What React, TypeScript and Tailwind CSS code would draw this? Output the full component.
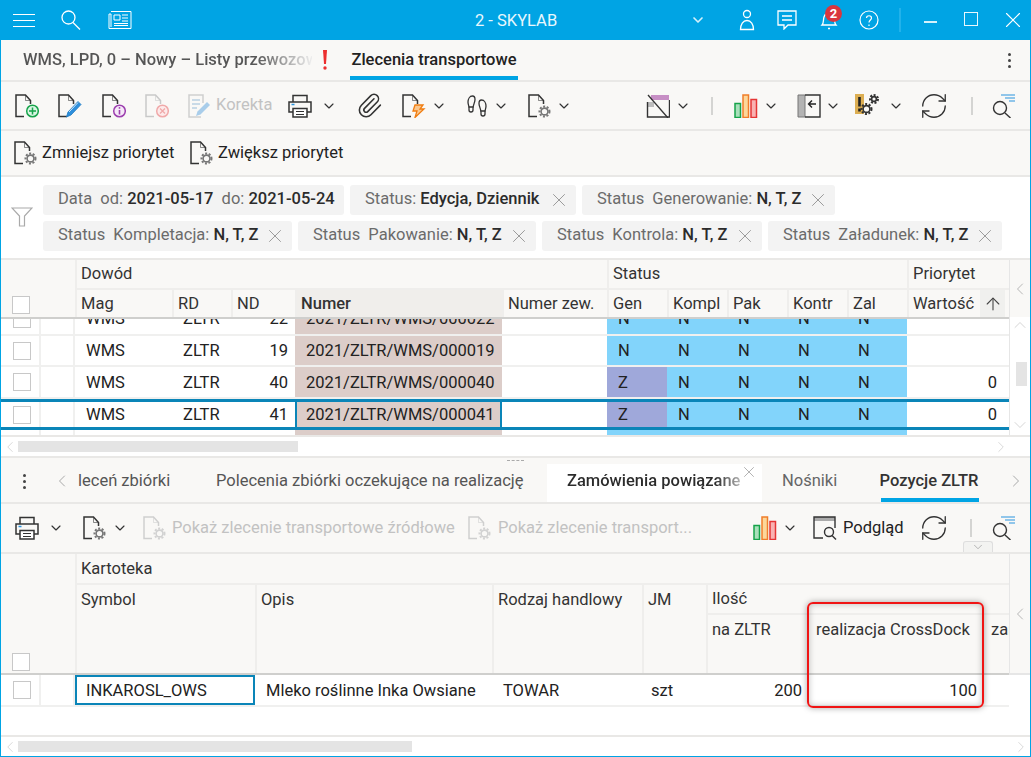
import { ChevronDown, ChevronLeft, ChevronRight, ChevronUp, Footprints, Paperclip, RefreshCw, X, ArrowUp } from 'lucide-react';
import type { ReactNode } from 'react';

const topCols = 'grid grid-cols-[40px_34px_97px_59px_64px_207px_105px_60px_60px_60px_60px_60px_102px]';
const bottomCols = 'grid grid-cols-[40px_34px_180px_237px_150px_64px_101px_177px_25px]';

const Gear = ({ x, y, r = 4, color = '#777' }: { x: number; y: number; r?: number; color?: string }) => (
  <g fill="none" stroke={color}>
    <circle cx={x} cy={y} r={r + 1} strokeWidth="2" strokeDasharray="2 1.6" />
    <circle cx={x} cy={y} r={r - 0.6} strokeWidth="1.6" />
  </g>
);

const Doc = ({ children, stroke = '#333' }: { children?: ReactNode; stroke?: string }) => (
  <svg width="24" height="24" viewBox="0 0 24 24" fill="none" className="shrink-0">
    <path d="M9 22.500H1V1h9.500l5 5.500V10" stroke={stroke} strokeWidth="1.500" />
    <path d="M10.500 1.500v5h5" stroke={stroke} strokeWidth="0.800" opacity="0.7" />
    {children}
  </svg>
);

const DocPlus = () => (
  <Doc>
    <circle cx="17.500" cy="17" r="5.800" fill="#d9f5e3" stroke="#16a34a" strokeWidth="1.500" />
    <path d="M17.500 13.500v7M14 17h7" stroke="#16a34a" strokeWidth="1.500" />
  </Doc>
);
const DocPen = () => (
  <Doc>
    <path d="M8.500 23l1.500-5 10-10.500 3 3L13 21z" fill="#2e8fdc" stroke="#1c79c0" strokeWidth="0.800" />
    <path d="M11 18l9-9.500" stroke="#fff" strokeWidth="0.800" />
  </Doc>
);
const DocInfo = () => (
  <Doc>
    <circle cx="17.500" cy="17" r="5.800" fill="#f6e8f8" stroke="#9c3fae" strokeWidth="1.500" />
    <path d="M17.500 16v4.500" stroke="#9c3fae" strokeWidth="1.600" />
    <circle cx="17.500" cy="13.900" r="0.900" fill="#9c3fae" />
  </Doc>
);
const DocX = () => (
  <Doc stroke="#c9c9c9">
    <circle cx="17.500" cy="17" r="5.800" fill="#fdeaea" stroke="#f0a9a9" strokeWidth="1.500" />
    <path d="M15 14.500l5 5M20 14.500l-5 5" stroke="#f0a9a9" strokeWidth="1.300" />
  </Doc>
);
const DocBolt = () => (
  <Doc>
    <path d="M13 11h8l-3 4h4l-9 8.500 2-6.500h-4z" fill="#fbc78d" stroke="#f07d12" strokeWidth="1.300" />
  </Doc>
);
const DocGear = ({ muted = false }: { muted?: boolean }) => (
  <Doc stroke={muted ? '#cfcfcf' : '#333'}>
    <Gear x={16.5} y={17.5} color={muted ? '#d2d2d2' : '#777'} />
  </Doc>
);

const EditNote = () => (
  <svg width="24" height="24" viewBox="0 0 24 24" fill="none" className="shrink-0">
    <path d="M14 23H2V1h14v8" stroke="#cfcfcf" strokeWidth="1.500" />
    <path d="M5 6h8M5 10h8M5 14h5" stroke="#b9cfe2" strokeWidth="1.300" />
    <path d="M9 22l1.500-4.500L20 8l3 3-9.500 9.500z" fill="#a9cdea" />
  </svg>
);

const Printer = () => (
  <svg width="24" height="24" viewBox="0 0 24 24" fill="none" className="shrink-0">
    <path d="M5 8V1.500h14V8" stroke="#333" strokeWidth="1.500" />
    <path d="M5 18H1V8h22v10h-4" stroke="#333" strokeWidth="1.500" />
    <path d="M5 14.500h14v8.500H5z" fill="#fff" stroke="#333" strokeWidth="1.500" />
    <path d="M8 17.500h8M8 20.500h8" stroke="#333" />
    <path d="M3.500 10.500h3" stroke="#2a94de" strokeWidth="1.500" />
  </svg>
);

const Bars = () => (
  <svg width="24" height="24" viewBox="0 0 24 24" className="shrink-0">
    <rect x="1" y="9.500" width="5.500" height="14" fill="#a9e0bb" stroke="#16a34a" strokeWidth="1.500" />
    <rect x="9" y="1" width="5.500" height="22.500" fill="#fcd79a" stroke="#f07d2a" strokeWidth="1.500" />
    <rect x="17" y="5.500" width="5.500" height="18" fill="#f9b2b2" stroke="#e53535" strokeWidth="1.500" />
  </svg>
);

const CalendarOff = () => (
  <svg width="24" height="24" viewBox="0 0 24 24" fill="none" className="shrink-0">
    <path d="M5 1h18v5H5z" fill="#c78fc5" />
    <path d="M1 8h7v5H1z" fill="#bdbdbd" />
    <path d="M1.500 8v15h22V6" stroke="#333" strokeWidth="1.400" />
    <path d="M2 1l20 23" stroke="#333" strokeWidth="1.300" />
  </svg>
);

const PanelArrow = () => (
  <svg width="24" height="24" viewBox="0 0 24 24" fill="none" className="shrink-0">
    <path d="M1 1h7v22H1z" fill="#b3b3b3" stroke="#777" />
    <path d="M8 1h15v22H8" stroke="#333" strokeWidth="1.400" />
    <path d="M19 10h-7M15 6.500L11.500 10l3.500 3.500" stroke="#222" strokeWidth="1.400" />
  </svg>
);

const AlertGears = () => (
  <svg width="24" height="24" viewBox="0 0 24 24" fill="none" className="shrink-0">
    <path d="M0 0h9v20H0z" fill="#dcae52" />
    <path d="M4.500 3v9.500" stroke="#222" strokeWidth="2.600" />
    <path d="M4.500 14.500v3" stroke="#222" strokeWidth="2.600" />
    <Gear x={11.5} y={15} r={4} color="#333" />
    <Gear x={19} y={5} r={3} color="#333" />
  </svg>
);

const SearchLines = () => (
  <svg width="24" height="24" viewBox="0 0 24 24" fill="none" className="shrink-0">
    <circle cx="9" cy="14" r="6.500" stroke="#333" strokeWidth="1.400" />
    <path d="M14 19l5.500 5" stroke="#333" strokeWidth="1.400" />
    <path d="M10 1h14M14 4h10M18 7h6" stroke="#2a94de" strokeWidth="1.200" />
  </svg>
);

const Preview = () => (
  <svg width="24" height="24" viewBox="0 0 24 24" fill="none" className="shrink-0">
    <path d="M1 1h21v4H1z" fill="#aaa" />
    <path d="M10 22H1V1h21v11" stroke="#333" strokeWidth="1.400" />
    <circle cx="16" cy="16" r="4.500" stroke="#333" strokeWidth="1.400" />
    <path d="M19 19.500l4 4" stroke="#333" strokeWidth="1.400" />
  </svg>
);

const Refresh = () => <RefreshCw size={30} strokeWidth={1.050} color="#333" className="shrink-0" />;
const Chev = ({ className = '' }: { className?: string }) => (
  <ChevronDown size={16} strokeWidth={1.75} color="#333" className={`shrink-0 ${className}`} />
);
const Sep = ({ className = '' }: { className?: string }) => <div className={`h-[18px] w-[2px] shrink-0 bg-[#d4d4d2] ${className}`} />;
const Kebab = ({ className = '' }: { className?: string }) => (
  <div className={`flex flex-col gap-[3px] ${className}`}>
    <div className="size-[3px] rounded-full bg-[#444]" />
    <div className="size-[3px] rounded-full bg-[#444]" />
    <div className="size-[3px] rounded-full bg-[#444]" />
  </div>
);
const Check = ({ className = '' }: { className?: string }) => (
  <div className={`size-[18px] border border-[#c8c8c8] bg-white ${className}`} />
);

const Chip = ({ w, children, closable = true }: { w: string; children: ReactNode; closable?: boolean }) => (
  <div className={`flex h-[30px] items-center justify-between rounded-[3px] bg-[#f3f3f3] pl-[15px] pr-[6px] text-[#6b6b6b] ${w}`}>
    <span className="whitespace-pre">{children}</span>
    {closable && <X size={22} strokeWidth={0.9} color="#888" className="shrink-0" />}
  </div>
);
const B = ({ children }: { children: ReactNode }) => <span className="font-medium text-[#2b2b2b]">{children}</span>;

const HeadCell = ({ children, className = '' }: { children?: ReactNode; className?: string }) => (
  <div className={`flex overflow-hidden whitespace-nowrap border-l-2 border-[#efeeec] pl-[4px] text-[#333] ${className}`}>{children}</div>
);

type TopRow = { h: string; nd: string; numer: string; gen: string; prio?: string; selected?: boolean };
const topRows: TopRow[] = [
  { h: 'h-[33px] -mt-[16px]', nd: '22', numer: '2021/ZLTR/WMS/000022', gen: 'N' },
  { h: 'h-[31px]', nd: '19', numer: '2021/ZLTR/WMS/000019', gen: 'N' },
  { h: 'h-[32px]', nd: '40', numer: '2021/ZLTR/WMS/000040', gen: 'Z', prio: '0' },
  { h: 'h-[31px]', nd: '41', numer: '2021/ZLTR/WMS/000041', gen: 'Z', prio: '0', selected: true },
];

const Row = ({ row }: { row: TopRow }) => {
  const y = row.selected ? 'border-y-[3px] border-[#0a85b8]' : 'border-b-2 border-[#f0f0ef]';
  return (
    <div className={`${topCols} ${row.h} ${y}`}>
      <div className="flex items-center border-r-2 border-[#f0f0ef] pl-[12px]"><Check /></div>
      <div className="border-r-2 border-[#f0f0ef]" />
      <div className="flex items-center pl-[11px] pt-[2px]">WMS</div>
      <div className="flex items-center pl-[11px] pt-[2px]">ZLTR</div>
      <div className="flex items-center justify-end pr-[7px] pt-[2px]">{row.nd}</div>
      <div className={`flex items-center bg-[#dccdc9] pt-[2px] ${row.selected ? 'border-x-[2px] border-[#0a85b8] pl-[9px]' : 'pl-[11px]'}`}>{row.numer}</div>
      <div />
      <div className={`flex items-center pl-[11px] pt-[2px] ${row.gen === 'Z' ? 'bg-[#9fa8da]' : 'bg-[#82d4fb]'}`}>{row.gen}</div>
      {[0, 1, 2, 3].map((i) => (
        <div key={i} className="flex items-center bg-[#82d4fb] pl-[11px] pt-[2px]">N</div>
      ))}
      <div className="flex items-center justify-end pr-[12px] pt-[2px]">{row.prio}</div>
    </div>
  );
};

export default function App() {
  return (
    <div className="flex h-screen w-full flex-col overflow-hidden border-x border-b border-[#00a4e4] bg-white font-['Roboto',sans-serif] text-[16.5px] leading-none text-[#222]">
      {/* pasek tytulu */}
      <div className="-mx-px flex h-[40px] shrink-0 items-center bg-[#00a4e4] text-white">
        <div className="ml-[13px] flex w-[22px] flex-col gap-[5px]">
          <div className="h-px bg-white" /><div className="h-px bg-white" /><div className="h-px bg-white" />
        </div>
        <svg width="22" height="22" viewBox="0 0 22 22" fill="none" stroke="#fff" strokeWidth="1.300" className="ml-[25px]">
          <circle cx="8.500" cy="8.500" r="6.500" /><path d="M13 13.500l7 7" />
        </svg>
        <svg width="24" height="20" viewBox="0 0 24 20" fill="none" stroke="#fff" className="ml-[26px]">
          <path d="M3 1.500h20v17H1V4h2v13" />
          <path d="M6 5h6v5H6zM14 5h6M14 8h6M14 11h6M6 13.500h14M6 15.500h14" />
        </svg>
        <div className="ml-[343px] w-[81px] whitespace-nowrap pt-[2px] text-center text-[#e8f7fd]">2 - SKYLAB</div>
        <ChevronDown size={16} strokeWidth={2.500} color="#d5f1fb" className="ml-[134px]" />
        <svg width="20" height="22" viewBox="0 0 20 22" fill="none" stroke="#fff" strokeWidth="1.300" className="ml-[31px]">
          <circle cx="10" cy="5" r="3.500" /><path d="M3.500 20.500c0-5 2.500-9 6.500-9s6.500 4 6.500 9z" />
        </svg>
        <svg width="20" height="20" viewBox="0 0 20 20" fill="none" stroke="#fff" strokeWidth="1.300" className="ml-[20px]">
          <path d="M1 1h18v14h-8l-4 4v-4H1z" /><path d="M5 6h10M5 10h10" />
        </svg>
        <div className="relative ml-[22px] size-[20px]">
          <svg width="20" height="20" viewBox="0 0 20 20" fill="none" stroke="#fff" strokeWidth="1.300">
            <path d="M3 15c2-2 1-5 2-8s3-4 5-4 4 1 5 4 0 6 2 8zM9 18.500h2" />
          </svg>
          <div className="absolute -right-[3px] -top-[5px] flex size-[17px] items-center justify-center rounded-full bg-[#d9363e] text-[13px] font-bold text-white">2</div>
        </div>
        <svg width="20" height="20" viewBox="0 0 20 20" fill="none" stroke="#fff" strokeWidth="1.200" className="ml-[20px]">
          <circle cx="10" cy="10" r="9" /><path d="M7.500 8c0-3 5-3 5 0 0 2-2.500 2-2.500 4.500M10 14.500v1.500" />
        </svg>
        <div className="ml-[20px] h-[24px] w-[2px] bg-[#22b2ea]" />
        <div className="ml-[23px] mt-[4px] h-[1.500px] w-[13px] bg-[#d5f1fb]" />
        <div className="ml-[27px] -mt-[2px] size-[14px] border-[1.500px] border-[#e8f7fd]" />
        <X size={26} strokeWidth={1} color="#fff" className="ml-[22px]" />
      </div>

      {/* zakladki */}
      <div className="flex h-[42px] shrink-0 items-center border-b-2 border-[#e9e8e6] bg-[#f9f8f6]">
        <div className="ml-[22px] mt-[1px] w-[289px] overflow-hidden whitespace-nowrap bg-gradient-to-r from-[#555] from-80% to-[#eee] bg-clip-text py-[2px] font-medium text-transparent">WMS, LPD, 0 – Nowy – Listy przewozowe</div>
        <svg width="6" height="20" viewBox="0 0 6 20" className="ml-[10px] shrink-0">
          <path d="M1 0h4l-1 14H2z" fill="#ec2f2f" />
          <circle cx="3" cy="18" r="1.700" fill="#ec2f2f" />
        </svg>
        <div className="relative ml-[22px] flex h-[40px] w-[168px] items-center justify-center whitespace-nowrap pt-[1px] font-medium text-[#222]">
          Zlecenia transportowe
          <div className="absolute bottom-0 left-0 right-0 h-[4px] bg-[#00a4e4]" />
        </div>
        <Kebab className="ml-auto mr-[19px]" />
      </div>

      {/* toolbar 1 */}
      <div className="flex h-[49px] shrink-0 items-center border-b-2 border-[#e9e8e6] bg-[#f9f8f6]">
        <div className="ml-[14px]"><DocPlus /></div>
        <div className="ml-[19px]"><DocPen /></div>
        <div className="ml-[20px]"><DocInfo /></div>
        <div className="ml-[19px]"><DocX /></div>
        <div className="ml-[18px]"><EditNote /></div>
        <div className="ml-[5px] w-[56px] text-[#c2c2c2]">Korekta</div>
        <div className="ml-[16px]"><Printer /></div>
        <Chev className="ml-[9px]" />
        <Paperclip size={27} strokeWidth={1.400} color="#333" className="ml-[19px] shrink-0" />
        <div className="ml-[19px]"><DocBolt /></div>
        <Chev className="ml-[5px]" />
        <Footprints size={24} strokeWidth={1.300} color="#333" className="ml-[18px] shrink-0" />
        <Chev className="ml-[4px]" />
        <div className="ml-[19px]"><DocGear /></div>
        <Chev className="ml-[4px]" />
        <div className="flex-1" />
        <CalendarOff />
        <Chev className="ml-[5px]" />
        <Sep className="ml-[20px]" />
        <div className="ml-[21px]"><Bars /></div>
        <Chev className="ml-[5px]" />
        <div className="ml-[18px]"><PanelArrow /></div>
        <Chev className="ml-[4px]" />
        <div className="ml-[14px]"><AlertGears /></div>
        <Chev className="ml-[9px]" />
        <div className="ml-[15px]"><Refresh /></div>
        <Sep className="ml-[22px]" />
        <div className="ml-[18px] mr-[15px]"><SearchLines /></div>
      </div>

      {/* toolbar 2 */}
      <div className="flex h-[46px] shrink-0 items-center border-b-2 border-[#e9e8e6] bg-[#f9f8f6]">
        <div className="ml-[13px]"><DocGear /></div>
        <div className="ml-[4px] w-[132px] whitespace-nowrap pt-[1px]">Zmniejsz priorytet</div>
        <div className="ml-[16px]"><DocGear /></div>
        <div className="ml-[4px] whitespace-nowrap pt-[1px]">Zwiększ priorytet</div>
      </div>

      {/* filtry */}
      <div className="flex h-[81px] shrink-0 items-center">
        <svg width="22" height="21" viewBox="0 0 22 21" fill="none" stroke="#aaa" strokeWidth="1.200" className="ml-[10px] shrink-0">
          <path d="M1 1h20l-7.500 8v10h-5V9z" />
        </svg>
        <div className="ml-[10px] flex flex-wrap gap-x-[6px] gap-y-[6px]">
          <Chip w="w-[301px]" closable={false}>Data  od: <B>2021-05-17</B>  do: <B>2021-05-24</B></Chip>
          <Chip w="w-[226px]">Status: <B>Edycja, Dziennik</B></Chip>
          <Chip w="w-[253px]">Status  Generowanie: <B>N, T, Z</B></Chip>
          <Chip w="w-[249px]">Status  Kompletacja: <B>N, T, Z</B></Chip>
          <Chip w="w-[238px]">Status  Pakowanie: <B>N, T, Z</B></Chip>
          <Chip w="w-[220px]">Status  Kontrola: <B>N, T, Z</B></Chip>
          <Chip w="w-[234px]">Status  Załadunek: <B>N, T, Z</B></Chip>
        </div>
      </div>

      {/* gorna tabela */}
      <div className="flex h-[198px] shrink-0 flex-col border-t-2 border-[#e9e8e6]">
        <div className="flex flex-1 overflow-hidden">
          <div className="w-[1008px] shrink-0">
            <div className={`${topCols} h-[59px] grid-rows-[28px_29px] border-b-2 border-[#cfcfcd] bg-[#f9f8f6]`}>
              <div className="col-span-2 row-span-2 flex items-end pb-[3px] pl-[11px]"><Check className="border-[#bdbdbd]" /></div>
              <HeadCell className="col-span-5 items-center">Dowód</HeadCell>
              <HeadCell className="col-span-5 items-center">Status</HeadCell>
              <HeadCell className="items-center">Priorytet</HeadCell>
              <HeadCell className="items-center border-t-2 pt-[1px]">Mag</HeadCell>
              <HeadCell className="items-center border-t-2 pt-[1px]">RD</HeadCell>
              <HeadCell className="items-center border-t-2 pt-[1px]">ND</HeadCell>
              <HeadCell className="items-center border-t-2 bg-[#f0eeeb] pt-[1px] font-medium text-[#222]">Numer</HeadCell>
              <HeadCell className="items-center border-t-2 pt-[1px]">Numer zew.</HeadCell>
              <HeadCell className="items-center border-t-2 pt-[1px]">Gen</HeadCell>
              <HeadCell className="items-center border-t-2 pt-[1px]">Kompl</HeadCell>
              <HeadCell className="items-center border-t-2 pt-[1px]">Pak</HeadCell>
              <HeadCell className="items-center border-t-2 pt-[1px]">Kontr</HeadCell>
              <HeadCell className="items-center border-t-2 pt-[1px]">Zal</HeadCell>
              <div className="flex border-l-2 border-t-2 border-[#efeeec]">
                <div className="flex flex-1 items-center pl-[4px] pt-[1px] text-[#333]">Wartość</div>
                <div className="mr-[4px] flex w-[25px] items-center justify-center bg-[#f0f0ee]"><ArrowUp size={20} strokeWidth={1.300} color="#444" /></div>
              </div>
            </div>
            <div className="h-[116px] overflow-hidden">
              {topRows.map((r) => <Row key={r.nd} row={r} />)}
              <div className={`${topCols} h-[5px]`}>
                <div className="border-r-2 border-[#f0f0ef]" /><div className="border-r-2 border-[#f0f0ef]" /><div /><div /><div />
                <div className="bg-[#dccdc9]" /><div />
                <div className="col-span-5 bg-[#82d4fb]" />
              </div>
            </div>
          </div>
          <div className="flex flex-1 flex-col border-l border-[#e6e6e6] bg-white">
            <div className="flex h-[59px] items-center justify-center bg-[#f9f8f6]"><ChevronLeft size={20} strokeWidth={1} color="#aaa" /></div>
            <div className="flex flex-1 flex-col items-center">
              <ChevronUp size={20} strokeWidth={1} color="#ccc" className="-mt-[2px]" />
              <div className="ml-[2px] mt-[27px] h-[24px] w-[11px] bg-[#e4e4e4]" />
              <ChevronDown size={20} strokeWidth={1} color="#ccc" className="mt-[29px]" />
            </div>
          </div>
        </div>
        <div className="flex h-[21px] shrink-0 items-center border-t-2 border-[#e9e8e6]">
          <ChevronLeft size={18} strokeWidth={1} color="#ccc" className="shrink-0" />
          <div className="-ml-px h-[11px] w-[280px] bg-[#e4e4e4]" />
          <ChevronRight size={18} strokeWidth={1} color="#ccc" className="ml-[694px] shrink-0" />
        </div>
      </div>

      {/* dolne zakladki */}
      <div className="relative flex h-[48px] shrink-0 items-end border-y-2 border-[#e9e8e6] bg-[#f9f8f6]">
        <div className="absolute left-[506px] top-[2px] w-[17px] border-t border-dashed border-[#aaa]" />
        <div className="flex h-[42px] w-full items-center">
          <Kebab className="ml-[22px] shrink-0" />
          <ChevronLeft size={20} strokeWidth={1} color="#999" className="ml-[26px] shrink-0" />
          <div className="ml-[6px] w-[92px] whitespace-nowrap pt-[1px] text-[#555]">leceń zbiórki</div>
          <div className="ml-[46px] w-[307px] whitespace-nowrap pt-[1px] text-[#555]">Polecenia zbiórki oczekujące na realizację</div>
          <div className="relative ml-[24px] mt-[4px] flex h-[38px] w-[215px] items-center bg-white pb-[3px] pl-[20px]">
            <div className="w-[174px] overflow-hidden whitespace-nowrap bg-gradient-to-r from-[#2b2b2b] from-85% to-[#bbb] bg-clip-text py-[2px] font-medium text-transparent">Zamówienia powiązane</div>
            <X size={18} strokeWidth={1} color="#999" className="absolute right-[4px] -top-[1px]" />
          </div>
          <div className="ml-[20px] w-[55px] whitespace-nowrap pt-[1px] text-[#666]">Nośniki</div>
          <div className="relative ml-[42px] mt-[4px] flex h-[38px] w-[100px] items-center justify-center whitespace-nowrap pb-[3px] font-medium text-[#333]">
            Pozycje ZLTR
            <div className="absolute bottom-0 left-[2px] right-0 h-[4px] bg-[#00a4e4]" />
          </div>
          <ChevronRight size={20} strokeWidth={1} color="#999" className="ml-[27px] shrink-0" />
        </div>
      </div>

      {/* toolbar dolny */}
      <div className="relative flex h-[50px] shrink-0 items-center border-b-2 border-[#e9e8e6] bg-[#f9f8f6]">
        <div className="ml-[14px]"><Printer /></div>
        <Chev className="ml-[9px]" />
        <div className="ml-[19px]"><DocGear /></div>
        <Chev className="ml-[5px]" />
        <div className="ml-[15px]"><DocGear muted /></div>
        <div className="ml-[5px] w-[282px] whitespace-nowrap text-[#c2c2c2]">Pokaż zlecenie transportowe źródłowe</div>
        <div className="ml-[14px]"><DocGear muted /></div>
        <div className="ml-[6px] whitespace-nowrap text-[#c2c2c2]">Pokaż zlecenie transport...</div>
        <div className="flex-1" />
        <Bars />
        <Chev className="ml-[5px]" />
        <div className="ml-[15px]"><Preview /></div>
        <div className="ml-[6px] w-[59px] whitespace-nowrap">Podgląd</div>
        <div className="ml-[17px]"><Refresh /></div>
        <Sep className="ml-[21px]" />
        <div className="ml-[19px] mr-[15px]"><SearchLines /></div>
        <div className="absolute bottom-0 left-[962px] flex h-[11px] w-[30px] items-start justify-center rounded-t-[3px] border border-b-0 border-[#dedede] bg-[#f3f3f1]">
          <ChevronDown size={14} strokeWidth={1} color="#888" className="-mt-[2px]" />
        </div>
      </div>

      {/* dolna tabela */}
      <div className="relative flex min-h-0 flex-1 flex-col">
        <div className="flex flex-1">
          <div className="w-[1008px] shrink-0">
            <div className={`${bottomCols} h-[121px] grid-rows-[31px_30px_58px] border-b-2 border-[#cfcfcd] bg-[#f9f8f6]`}>
              <div className="col-span-2 row-span-3 flex items-end pb-[2px] pl-[11px]"><Check className="border-[#bdbdbd]" /></div>
              <div className="col-span-7 flex items-center border-b-2 border-l-2 border-[#efeeec] pl-[4px] pt-[2px] text-[#333]">Kartoteka</div>
              <HeadCell className="row-span-2 items-start pt-[7px]">Symbol</HeadCell>
              <HeadCell className="row-span-2 items-start pt-[7px]">Opis</HeadCell>
              <HeadCell className="row-span-2 items-start pt-[7px]">Rodzaj handlowy</HeadCell>
              <HeadCell className="row-span-2 items-start pt-[7px]">JM</HeadCell>
              <HeadCell className="col-span-3 items-center border-b-2 pt-[1px]">Ilość</HeadCell>
              <HeadCell className="items-start pt-[7px]">na ZLTR</HeadCell>
              <div className="overflow-hidden whitespace-nowrap pl-[9px] pt-[7px] text-[#333]">realizacja CrossDock</div>
              <div className="overflow-hidden whitespace-nowrap pl-[7px] pt-[7px] text-[#333]">zamówione</div>
            </div>
            <div className={`${bottomCols} h-[32px] border-b-2 border-[#f0f0ef]`}>
              <div className="flex items-center border-r-2 border-[#f0f0ef] pl-[12px]"><Check /></div>
              <div className="border-r-2 border-[#f0f0ef]" />
              <div className="flex items-center border-2 border-[#0a85b8] pl-[9px] pt-[2px]">INKAROSL_OWS</div>
              <div className="flex items-center whitespace-nowrap pl-[11px] pt-[2px]">Mleko roślinne Inka Owsiane</div>
              <div className="flex items-center pl-[11px] pt-[2px]">TOWAR</div>
              <div className="flex items-center pl-[9px] pt-[2px]">szt</div>
              <div className="flex items-center justify-end pr-[5px] pt-[2px]">200</div>
              <div className="flex items-center justify-end pr-[7px] pt-[2px]">100</div>
              <div />
            </div>
          </div>
          <div className="flex flex-1 flex-col">
            <div className="flex h-[121px] items-center justify-center border-b-2 border-l border-[#e6e6e6] bg-[#f9f8f6]"><ChevronLeft size={20} strokeWidth={1} color="#aaa" /></div>
          </div>
        </div>
        <div className="flex h-[21px] shrink-0 items-center border-t-2 border-[#e9e8e6]">
          <ChevronLeft size={18} strokeWidth={1} color="#ccc" className="shrink-0" />
          <div className="-ml-px h-[11px] w-[394px] bg-[#e4e4e4]" />
          <ChevronRight size={18} strokeWidth={1} color="#ccc" className="ml-[600px] shrink-0" />
        </div>
        {/* ramka wyrozniajaca */}
        <div className="absolute left-[806px] top-[48px] h-[106px] w-[177px] rounded-[6px] border-2 border-[#f01414] shadow-[0_0_6px_rgba(0,0,0,0.35),inset_0_0_6px_rgba(0,0,0,0.25)]" />
      </div>
    </div>
  );
}
